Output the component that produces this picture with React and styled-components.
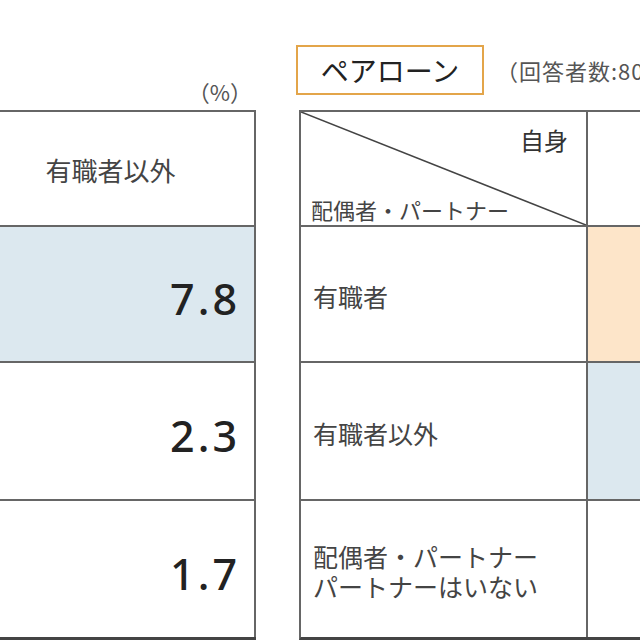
import React from 'react';
import styled, { createGlobalStyle } from 'styled-components';

const GlobalStyle = createGlobalStyle`
  html, body {
    margin: 0;
    padding: 0;
    background: #fff;
    overflow: hidden;
  }
  body {
    font-family: "Noto Sans CJK JP", "Noto Sans", sans-serif;
    color: #333;
  }
`;

const Page = styled.div`
  display: flex;
  gap: 43px;
  width: 760px;
  height: 640px;
  margin-left: -35px;
  padding-top: 45px;
  box-sizing: border-box;
`;

const Section = styled.div`
  display: flex;
  flex-direction: column;
  flex: none;
`;

const Caption = styled.div`
  height: 67px;
  display: flex;
  align-items: ${(p) => (p.$end ? 'flex-end' : 'flex-start')};
  justify-content: ${(p) => (p.$end ? 'flex-end' : 'flex-start')};
  gap: 12px;
  margin-left: ${(p) => (p.$end ? '0' : '-3px')};
`;

const Unit = styled.span`
  font-size: 22px;
  line-height: 30px;
  color: #555;
  padding: 0 4px 4px 0;
`;

const TitleBox = styled.div`
  width: 188px;
  height: 50px;
  box-sizing: border-box;
  border: 2px solid #e3a54a;
  display: flex;
  align-items: center;
  justify-content: center;
  font-size: 28px;
  color: #222;
`;

const Count = styled.span`
  font-size: 22px;
  color: #555;
  line-height: 50px;
  white-space: nowrap;
  letter-spacing: 1px;
`;

const Table = styled.div`
  display: grid;
  grid-template-columns: ${(p) => p.$cols};
  grid-template-rows: 115px 136px 138px 136px;
  border-top: 2px solid #666;
  border-bottom: 3px solid #444;
  border-left: 2px solid #666;
`;

const Cell = styled.div`
  position: relative;
  border-right: 2px solid #666;
  border-bottom: ${(p) => (p.$last ? 'none' : '2px solid #666')};
  background: ${(p) => p.$bg || '#fff'};
  display: flex;
  align-items: center;
  justify-content: ${(p) => p.$align || 'flex-start'};
  box-sizing: border-box;
  padding: 0 12px;
`;

const HeadText = styled.span`
  font-size: 26px;
  color: #444;
  margin-top: 2px;
`;

const Value = styled.span`
  font-family: "Noto Sans", sans-serif;
  font-weight: 500;
  font-size: 43px;
  color: #222;
  letter-spacing: 3px;
  padding-right: 2px;
  margin-top: 8px;
`;

const Label = styled.div`
  font-size: 25px;
  line-height: 30px;
  color: #444;
  margin-top: 4px;
`;

const DiagCell = styled(Cell)`
  display: flex;
  flex-direction: column;
  justify-content: space-between;
  align-items: stretch;
  padding: 10px 18px 0 10px;
`;

const Diagonal = styled.svg`
  position: absolute;
  inset: 0;
  width: 100%;
  height: 100%;
  pointer-events: none;
`;

const Self = styled.span`
  align-self: flex-end;
  font-size: 24px;
  color: #333;
`;

const Partner = styled.span`
  font-size: 22px;
  color: #444;
`;

const leftValues = [
  { v: '7.8', bg: '#dce8ef' },
  { v: '2.3' },
  { v: '1.7' },
];

const rightRows = [
  { label: ['有職者'], bg: '#fde5c9' },
  { label: ['有職者以外'], bg: '#dce8ef' },
  { label: ['配偶者・パートナー', 'パートナーはいない'] },
];

export default function App() {
  return (
    <>
      <GlobalStyle />
      <Page>
        <Section>
          <Caption $end>
            <Unit>（%）</Unit>
          </Caption>
          <Table $cols="289px">
            <Cell $align="center">
              <HeadText>有職者以外</HeadText>
            </Cell>
            {leftValues.map((row, i) => (
              <Cell key={row.v} $bg={row.bg} $align="flex-end" $last={i === leftValues.length - 1}>
                <Value>{row.v}</Value>
              </Cell>
            ))}
          </Table>
        </Section>
        <Section>
          <Caption>
            <TitleBox>ペアローン</TitleBox>
            <Count>（回答者数:800）</Count>
          </Caption>
          <Table $cols="287px 120px">
            <DiagCell>
              <Diagonal preserveAspectRatio="none" viewBox="0 0 100 100">
                <line x1="0" y1="0" x2="100" y2="100" stroke="#444" strokeWidth="1.6" vectorEffect="non-scaling-stroke" />
              </Diagonal>
              <Self>自身</Self>
              <Partner>配偶者・パートナー</Partner>
            </DiagCell>
            <Cell />
            {rightRows.map((row, i) => (
              <React.Fragment key={row.label[0]}>
                <Cell $last={i === rightRows.length - 1}>
                  <Label>
                    {row.label.map((l) => (
                      <div key={l}>{l}</div>
                    ))}
                  </Label>
                </Cell>
                <Cell $bg={row.bg} $last={i === rightRows.length - 1} />
              </React.Fragment>
            ))}
          </Table>
        </Section>
      </Page>
    </>
  );
}
